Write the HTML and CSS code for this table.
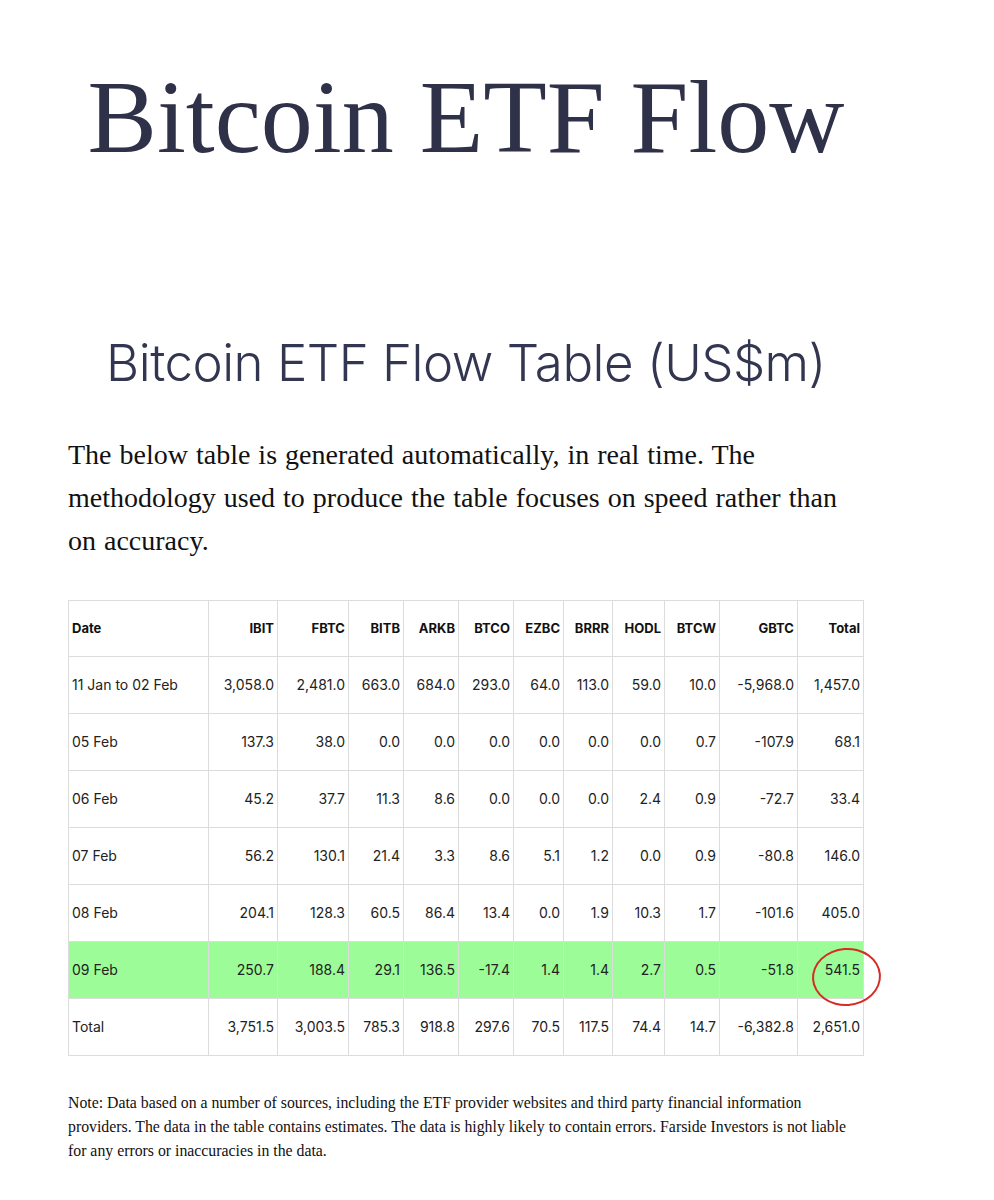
FILE: index.html
```html
<!DOCTYPE html>
<html lang="en">
<head>
<meta charset="utf-8">
<title>Bitcoin ETF Flow</title>
<link rel="stylesheet" href="styles.css">
</head>
<body>
<main class="page">
  <h1 class="title">Bitcoin ETF Flow</h1>
  <h2 class="subtitle">Bitcoin ETF Flow Table (US$m)</h2>
  <p class="intro">The below table is generated automatically, in real time. The methodology used to produce the table focuses on speed rather than on accuracy.</p>
  <table class="flows">
    <colgroup>
      <col class="c-date"><col class="c-ibit"><col class="c-fbtc"><col class="c-55"><col class="c-55"><col class="c-55"><col class="c-50"><col class="c-49"><col class="c-52"><col class="c-55"><col class="c-gbtc"><col class="c-total">
    </colgroup>
    <thead>
      <tr><th class="left">Date</th><th>IBIT</th><th>FBTC</th><th>BITB</th><th>ARKB</th><th>BTCO</th><th>EZBC</th><th>BRRR</th><th>HODL</th><th>BTCW</th><th>GBTC</th><th>Total</th></tr>
    </thead>
    <tbody>
      <tr><td class="left">11 Jan to 02 Feb</td><td>3,058.0</td><td>2,481.0</td><td>663.0</td><td>684.0</td><td>293.0</td><td>64.0</td><td>113.0</td><td>59.0</td><td>10.0</td><td>-5,968.0</td><td>1,457.0</td></tr>
      <tr><td class="left">05 Feb</td><td>137.3</td><td>38.0</td><td>0.0</td><td>0.0</td><td>0.0</td><td>0.0</td><td>0.0</td><td>0.0</td><td>0.7</td><td>-107.9</td><td>68.1</td></tr>
      <tr><td class="left">06 Feb</td><td>45.2</td><td>37.7</td><td>11.3</td><td>8.6</td><td>0.0</td><td>0.0</td><td>0.0</td><td>2.4</td><td>0.9</td><td>-72.7</td><td>33.4</td></tr>
      <tr><td class="left">07 Feb</td><td>56.2</td><td>130.1</td><td>21.4</td><td>3.3</td><td>8.6</td><td>5.1</td><td>1.2</td><td>0.0</td><td>0.9</td><td>-80.8</td><td>146.0</td></tr>
      <tr><td class="left">08 Feb</td><td>204.1</td><td>128.3</td><td>60.5</td><td>86.4</td><td>13.4</td><td>0.0</td><td>1.9</td><td>10.3</td><td>1.7</td><td>-101.6</td><td>405.0</td></tr>
      <tr class="highlight"><td class="left">09 Feb</td><td>250.7</td><td>188.4</td><td>29.1</td><td>136.5</td><td>-17.4</td><td>1.4</td><td>1.4</td><td>2.7</td><td>0.5</td><td>-51.8</td><td class="circled">541.5<span class="ring"></span></td></tr>
      <tr><td class="left">Total</td><td>3,751.5</td><td>3,003.5</td><td>785.3</td><td>918.8</td><td>297.6</td><td>70.5</td><td>117.5</td><td>74.4</td><td>14.7</td><td>-6,382.8</td><td>2,651.0</td></tr>
    </tbody>
  </table>
  <p class="note">Note: Data based on a number of sources, including the ETF provider websites and third party financial information providers. The data in the table contains estimates. The data is highly likely to contain errors. Farside Investors is not liable for any errors or inaccuracies in the data.</p>
</main>
</body>
</html>
```

FILE: styles.css
```css
html, body {
  margin: 0;
  padding: 0;
  background: #ffffff;
}

.page {
  width: 796px;
  margin-left: 68px;
  display: flex;
  flex-direction: column;
}

.title {
  margin: 55px 0 0 0;
  font-family: "Liberation Serif", "Times New Roman", serif;
  font-weight: 400;
  font-size: 104px;
  line-height: 1.2;
  color: #2e3148;
  text-align: center;
}

.subtitle {
  margin: 152px 0 0 0;
  font-family: Inter, "Noto Sans", sans-serif;
  font-weight: 300;
  font-size: 51px;
  line-height: 1.2;
  color: #333650;
  text-align: center;
  letter-spacing: -0.5px;
}

.intro {
  margin: 40px 0 0 0;
  font-family: "Liberation Serif", "Times New Roman", serif;
  font-size: 28px;
  line-height: 43px;
  word-spacing: 1px;
  color: #111111;
}

.flows {
  margin-top: 38px;
  width: 796px;
  border-collapse: collapse;
  table-layout: fixed;
  font-family: Inter, "Noto Sans", sans-serif;
  font-size: 14px;
  color: #222222;
}

.c-date { width: 140px; }
.c-ibit { width: 69px; }
.c-fbtc { width: 71px; }
.c-55 { width: 55px; }
.c-50 { width: 50px; }
.c-49 { width: 49px; }
.c-52 { width: 52px; }
.c-gbtc { width: 78px; }
.c-total { width: 66px; }

.flows th,
.flows td {
  border: 1px solid #dcdcdc;
  height: 56px;
  padding: 0 3px 0 3px;
  text-align: right;
  white-space: nowrap;
}

.flows th {
  height: 55px;
  font-size: 13px;
  font-weight: 700;
  color: #111111;
}

.flows .left {
  text-align: left;
}

.flows .highlight td {
  background: #9cfc98;
}

.circled {
  position: relative;
}

.ring {
  position: absolute;
  left: 14px;
  top: 6px;
  width: 65px;
  height: 54px;
  border: 2.5px solid #d62c24;
  border-radius: 50%;
  transform: rotate(-4deg);
  pointer-events: none;
}

.note {
  margin: 35px 0 0 0;
  font-family: "Liberation Serif", "Times New Roman", serif;
  font-size: 15.8px;
  line-height: 24px;
  color: #111111;
}
```
